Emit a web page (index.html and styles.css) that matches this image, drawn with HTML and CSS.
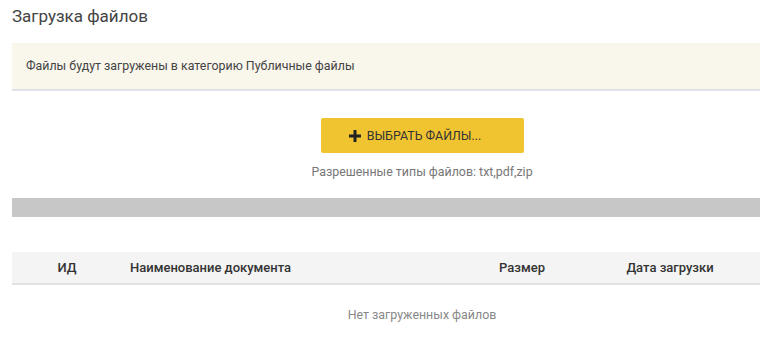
FILE: index.html
```html
<html>

<head>
  <meta charset="UTF-8">
  <title>Загрузка файлов</title>
  <link rel="stylesheet" href="styles.css">
</head>

<body>

  <div id="container">

    <h3 class="title">Загрузка файлов</h3>

    <div class="notice">Файлы будут загружены в категорию Публичные файлы</div>

    <div class="upload">
      <span class="btn">
        <svg class="plus" width="12" height="12" viewBox="0 0 12 12"><path d="M4.5 0h3v4.5H12v3H7.5V12h-3V7.5H0v-3h4.5z" fill="#222"/></svg>
        ВЫБРАТЬ ФАЙЛЫ...
      </span>
      <p class="types">Разрешенные типы файлов: txt,pdf,zip</p>
    </div>

    <div class="progress"></div>

    <table class="files">
      <thead>
        <tr>
          <th class="col-id">ИД</th>
          <th class="col-name">Наименование документа</th>
          <th class="col-size">Размер</th>
          <th class="col-date">Дата загрузки</th>
          <th class="col-act"></th>
        </tr>
      </thead>
      <tbody>
        <tr>
          <td colspan="5" class="empty">Нет загруженных файлов</td>
        </tr>
      </tbody>
    </table>

  </div>

</body>

</html>
```

FILE: styles.css
```css
/* базовые стили */
* {
  margin: 0;
  padding: 0;
  font-family: Roboto, "Noto Sans CJK SC", sans-serif;
}
body {
  overflow: hidden;
  background: #fff;
}
#container {
  width: 820px;
  padding: 0 12px;
}
.title {
  font-size: 17px;
  font-weight: 400;
  color: #444;
  line-height: 20px;
  padding-top: 6px;
}
.notice {
  margin-top: 17px;
  height: 46px;
  line-height: 46px;
  padding: 0 14px;
  background: #f9f6ec;
  border-bottom: 2px solid #dfe3e8;
  font-size: 12.4px;
  color: #444;
}
.upload {
  display: flex;
  flex-direction: column;
  align-items: center;
  padding-top: 27px;
}
.btn {
  display: flex;
  align-items: center;
  justify-content: center;
  gap: 6px;
  width: 203px;
  height: 35px;
  padding-right: 14px;
  box-sizing: border-box;
  background: #efc430;
  border-radius: 2px;
  font-size: 12.4px;
  color: #333;
  cursor: pointer;
}
.btn:hover {
  background: #e6b820;
}
.types {
  margin-top: 11px;
  font-size: 12.4px;
  color: #777;
}
.progress {
  margin-top: 19px;
  height: 19px;
  background: #c7c7c7;
}
.files {
  margin-top: 35px;
  width: 100%;
  border-collapse: collapse;
  font-size: 12.4px;
}
.files thead tr {
  background: #f4f4f4;
  border-bottom: 2px solid #e2e2e2;
}
.files th {
  height: 32px;
  font-size: 13px;
  font-weight: 500;
  color: #333;
}
.col-id {
  width: 110px;
  text-align: center;
}
.col-name {
  width: 322px;
  text-align: left;
  padding-left: 8px;
}
.col-size {
  width: 140px;
  text-align: center;
}
.col-date {
  width: 156px;
  text-align: center;
}
.empty {
  text-align: center;
  color: #888;
  height: 60px;
}
```
